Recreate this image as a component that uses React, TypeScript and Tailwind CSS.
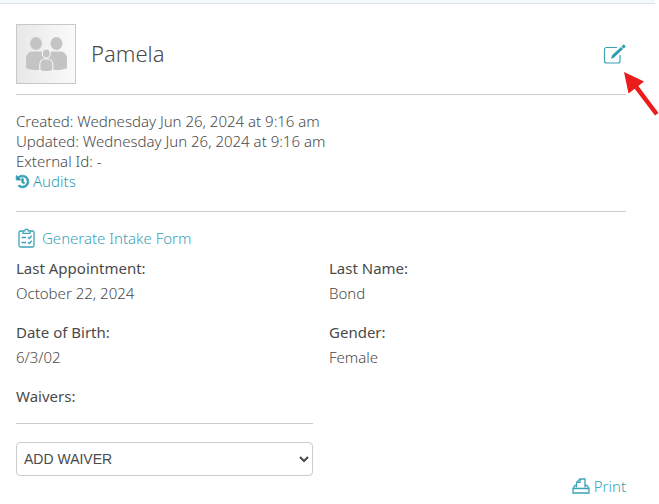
import type { ReactNode } from "react";
import { FaHistory } from "react-icons/fa";

function FamilyAvatar() {
  return (
    <svg viewBox="0 0 58 58" className="size-full" role="img" aria-label="Family">
      <g fill="#c4c4c4">
        <ellipse cx="19" cy="18.500" rx="6" ry="6.500" />
        <ellipse cx="39.500" cy="18.500" rx="6" ry="6.500" />
        <path d="M9 43V34c0-5 3-7.500 7-7.500h7c3 0 5 2 5 6V44c-6 1.500-14 1.500-19-1Z" />
        <path d="M50 43V34c0-5-3-7.500-7-7.500h-7c-3 0-5 2-5 6V44c6 1.500 14 1.500 19-1Z" />
        <g stroke="#f3f3f3" strokeWidth="1.200">
          <path d="M22.800 45.300V40c0-4 2-6 5-6h3c3 0 5 2 5 6v5.300c-3.500 1.700-9.500 1.700-13 0Z" />
          <ellipse cx="29.300" cy="28.500" rx="4" ry="4.500" />
        </g>
      </g>
    </svg>
  );
}

function EditIcon() {
  return (
    <svg width="23" height="22" viewBox="0 0 23 22" aria-hidden="true">
      <path
        d="M14 4.500H3.500a2 2 0 0 0-2 2V18a2 2 0 0 0 2 2H15a2 2 0 0 0 2-2v-6"
        fill="none"
        stroke="#3aa3b7"
        strokeWidth="1.200"
      />
      <path d="m7.800 16 1.500-4L18 4l2 2-8.700 8.300Z" fill="#2e9db3" />
      <path d="m18.500 3.500 1.500-1.600c.5-.5 1-.5 1.400 0l.8.800c.5.500.5 1 0 1.500L20.500 5.600Z" fill="#2e9db3" />
    </svg>
  );
}

function ClipboardIcon() {
  return (
    <svg width="18" height="20" viewBox="0 0 18 20" fill="none" stroke="#3aa3b7" strokeWidth="1.300" aria-hidden="true">
      <path d="M5 3H2.500A1.500 1.500 0 0 0 1 4.500v13A1.500 1.500 0 0 0 2.500 19h12a1.500 1.500 0 0 0 1.500-1.500v-13A1.500 1.500 0 0 0 14.500 3H12" />
      <path d="M5 5.300V2.800h1.800a1.700 1.700 0 0 1 3.400 0H12v2.500Z" />
      <path d="M3.500 9.500H8M3.500 14.500H8M10 9.300l1.300 1.200 2.500-2.700M10 14.300l1.300 1.200 2.500-2.700" />
    </svg>
  );
}

function PrinterIcon() {
  return (
    <svg width="18" height="16" viewBox="0 0 18 16" fill="none" stroke="#3aa3b7" strokeWidth="1.300" aria-hidden="true">
      <path d="M4.500 9.500V4.500L8 1h5v8.500" />
      <path d="M4.800 4.300H8V1" />
      <path d="M4.500 7.500H3L1 10.500V15h16v-4.500l-2-3h-2" />
      <path d="M1 10.500h3.500V10M17 10.500H4.500" />
    </svg>
  );
}

function Arrow() {
  return (
    <svg width="36" height="46" viewBox="0 0 36 46" className="absolute top-18 left-0" aria-hidden="true">
      <path d="M1 0 21 9.500 15.300 14 35.500 41 32 43.500 11.700 16.800 5.500 21.500Z" fill="#ea1c1c" />
    </svg>
  );
}

function Field({ label, children }: { label: string; children?: ReactNode }) {
  return (
    <div>
      <dt className="font-normal">{label}</dt>
      <dd className="mt-[5px] font-light">{children}</dd>
    </div>
  );
}

export default function App() {
  return (
    <div className="relative bg-white font-['Noto_Sans',sans-serif] text-[15px] leading-5 font-light text-[#4a4a4a]">
      <div className="mr-1 h-1 border-b border-[#d9e2e4] bg-[#f2fafa]" />
      <main className="pt-5 pr-[33px] pb-2 pl-4">
        <header className="flex items-center border-b border-[#ccc] pb-2.5">
          <div className="size-15 border border-[#c8c8c8] bg-linear-to-r from-[#e8e8e8] to-[#fafafa]">
            <FamilyAvatar />
          </div>
          <h1 className="ml-[15px] flex-1 pb-0.5 text-[22px] leading-7">Pamela</h1>
          <button type="button" aria-label="Edit">
            <EditIcon />
          </button>
        </header>

        <section className="border-b border-[#ccc] pt-4 pb-5">
          <p>Created: Wednesday Jun 26, 2024 at 9:16 am</p>
          <p>Updated: Wednesday Jun 26, 2024 at 9:16 am</p>
          <p>External Id: -</p>
          <a href="#audits" className="flex w-fit items-center gap-1 text-[#2e9db3]">
            <FaHistory className="size-[13px] overflow-visible stroke-current stroke-[28]" aria-hidden="true" />
            Audits
          </a>
        </section>

        <a href="#intake" className="mt-4 ml-0.5 flex w-fit items-center gap-[6px] text-[#3aa3b7]">
          <ClipboardIcon />
          Generate Intake Form
        </a>

        <dl className="mt-2.5 grid grid-cols-2 gap-x-4 gap-y-[19px]">
          <Field label="Last Appointment:">October 22, 2024</Field>
          <Field label="Last Name:">Bond</Field>
          <Field label="Date of Birth:">6/3/02</Field>
          <Field label="Gender:">Female</Field>
        </dl>

        <div className="mt-[19px] grid grid-cols-2 gap-x-4">
          <div>
            <label htmlFor="waiver" className="block border-b border-[#ccc] pb-[17px] font-normal">
              Waivers:
            </label>
            <select
              id="waiver"
              className="mt-[18px] block h-[34px] w-full rounded border border-[#ccc] bg-white px-[3px] font-['Liberation_Sans',Arial,sans-serif] text-[14px] font-normal"
            >
              <option>ADD WAIVER</option>
            </select>
          </div>
        </div>

        <div className="flex justify-end">
          <a href="#print" className="flex items-center gap-1 text-[#3aa3b7]">
            <PrinterIcon />
            Print
          </a>
        </div>
      </main>
      <div className="absolute top-0 right-0 w-9">
        <Arrow />
      </div>
    </div>
  );
}
